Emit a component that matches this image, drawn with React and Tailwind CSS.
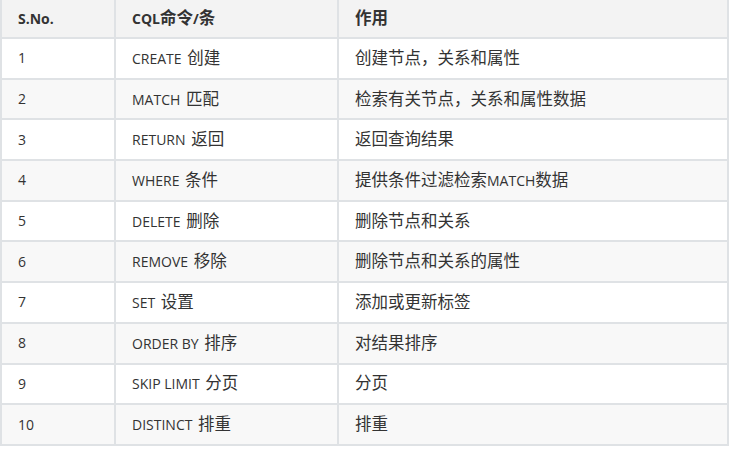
import React from 'react';

const rows = [
  ['1', 'CREATE 创建', '创建节点，关系和属性'],
  ['2', 'MATCH 匹配', '检索有关节点，关系和属性数据'],
  ['3', 'RETURN 返回', '返回查询结果'],
  ['4', 'WHERE 条件', '提供条件过滤检索MATCH数据'],
  ['5', 'DELETE 删除', '删除节点和关系'],
  ['6', 'REMOVE 移除', '删除节点和关系的属性'],
  ['7', 'SET 设置', '添加或更新标签'],
  ['8', 'ORDER BY 排序', '对结果排序'],
  ['9', 'SKIP LIMIT 分页', '分页'],
  ['10', 'DISTINCT 排重', '排重'],
];

const cols = 'grid grid-cols-[112px_221px_388px] gap-[2px]';

const CJK = /[\u3000-\u9fff\uff00-\uffef]/;

// CJK glyphs in the source render larger than the latin text
const Mixed = ({ text }) => {
  const parts = text.split(/([\u3000-\u9fff\uff00-\uffef]+)/).filter(Boolean);
  return (
    <span className="leading-5 whitespace-nowrap">
      {parts.map((p, i) =>
        CJK.test(p) ? (
          <span
            key={i}
            className={`text-[16.5px] ${i > 0 && parts[i - 1].endsWith(' ') ? 'ml-[2px]' : ''}`}
          >
            {p}
          </span>
        ) : (
          <span key={i}>{p}</span>
        )
      )}
    </span>
  );
};

const App = () => {
  return (
    <div
      className="w-[734px] h-[449px] bg-white overflow-hidden text-[14px] text-[#333]"
      style={{ fontFamily: '"Open Sans", "Noto Sans CJK SC", sans-serif' }}
    >
      <div className="w-[729px] flex flex-col gap-[2px] bg-[#dfe2e5] px-[2px] pb-[2px]">
        {/* Header */}
        <div className={cols}>
          {['S.No.', 'CQL命令/条', '作用'].map((h) => (
            <div key={h} className="h-[37px] bg-[#f3f3f3] px-4 flex items-center font-bold">
              <Mixed text={h} />
            </div>
          ))}
        </div>

        {rows.map((r, i) => (
          <div key={r[0]} className={cols}>
            {r.map((c, j) => (
              <div
                key={j}
                className={`h-[38.7px] px-4 flex items-center ${i % 2 === 0 ? 'bg-white' : 'bg-[#f8f8f8]'}`}
              >
                <Mixed text={c} />
              </div>
            ))}
          </div>
        ))}
      </div>
    </div>
  );
};

export default App;
